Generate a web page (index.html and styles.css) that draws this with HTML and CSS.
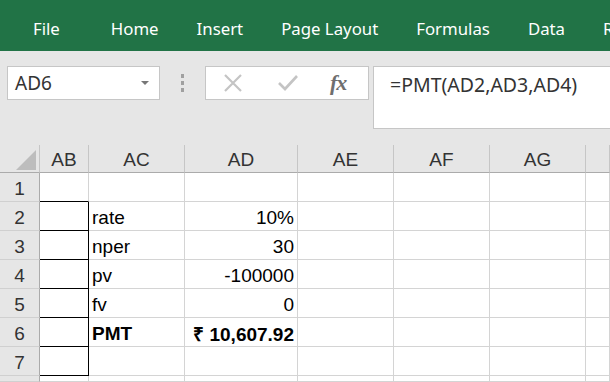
FILE: index.html
```html
<!DOCTYPE html>
<html lang="en">

<head>
    <meta charset="UTF-8">
    <title>PMT - Excel</title>
    <link rel="stylesheet" href="styles.css">
</head>

<body>
    <nav class="ribbon-tabs">
        <span class="tab file">File</span>
        <span class="tab">Home</span>
        <span class="tab">Insert</span>
        <span class="tab">Page Layout</span>
        <span class="tab">Formulas</span>
        <span class="tab">Data</span>
        <span class="tab">Review</span>
    </nav>

    <div class="formula-area">
        <div class="name-box">
            <span>AD6</span>
            <span class="caret"></span>
        </div>
        <div class="grip">
            <span></span><span></span><span></span>
        </div>
        <div class="fx-buttons">
            <svg width="22" height="22" viewBox="0 0 22 22">
                <path d="M3 3 L19 19 M19 3 L3 19" stroke="#c4c4c4" stroke-width="2.2" fill="none" />
            </svg>
            <svg width="22" height="22" viewBox="0 0 22 22">
                <path d="M2 11 L8 17 L20 4" stroke="#c4c4c4" stroke-width="2.6" fill="none" />
            </svg>
            <span class="fx">fx</span>
        </div>
        <div class="formula-input">=PMT(AD2,AD3,AD4)</div>
    </div>

    <div class="sheet">
        <div class="corner"><span class="tri"></span></div>
        <div class="col-head">AB</div>
        <div class="col-head">AC</div>
        <div class="col-head">AD</div>
        <div class="col-head">AE</div>
        <div class="col-head">AF</div>
        <div class="col-head">AG</div>
        <div class="col-head"></div>

        <div class="row-head">1</div>
        <div class="cell box-bottom"></div>
        <div class="cell"></div>
        <div class="cell"></div>
        <div class="cell"></div>
        <div class="cell"></div>
        <div class="cell"></div>
        <div class="cell"></div>

        <div class="row-head">2</div>
        <div class="cell boxed"></div>
        <div class="cell">rate</div>
        <div class="cell num">10%</div>
        <div class="cell"></div>
        <div class="cell"></div>
        <div class="cell"></div>
        <div class="cell"></div>

        <div class="row-head">3</div>
        <div class="cell boxed"></div>
        <div class="cell">nper</div>
        <div class="cell num">30</div>
        <div class="cell"></div>
        <div class="cell"></div>
        <div class="cell"></div>
        <div class="cell"></div>

        <div class="row-head">4</div>
        <div class="cell boxed"></div>
        <div class="cell">pv</div>
        <div class="cell num">-100000</div>
        <div class="cell"></div>
        <div class="cell"></div>
        <div class="cell"></div>
        <div class="cell"></div>

        <div class="row-head">5</div>
        <div class="cell boxed"></div>
        <div class="cell">fv</div>
        <div class="cell num">0</div>
        <div class="cell"></div>
        <div class="cell"></div>
        <div class="cell"></div>
        <div class="cell"></div>

        <div class="row-head">6</div>
        <div class="cell boxed"></div>
        <div class="cell bold">PMT</div>
        <div class="cell num bold">₹ 10,607.92</div>
        <div class="cell"></div>
        <div class="cell"></div>
        <div class="cell"></div>
        <div class="cell"></div>

        <div class="row-head">7</div>
        <div class="cell boxed"></div>
        <div class="cell"></div>
        <div class="cell"></div>
        <div class="cell"></div>
        <div class="cell"></div>
        <div class="cell"></div>
        <div class="cell"></div>

        <div class="row-head"></div>
        <div class="cell"></div>
        <div class="cell"></div>
        <div class="cell"></div>
        <div class="cell"></div>
        <div class="cell"></div>
        <div class="cell"></div>
        <div class="cell"></div>
    </div>
</body>

</html>
```

FILE: styles.css
```css
html {
    overflow: hidden;
}

body {
    margin: 0;
    padding: 0;
    background-color: #e6e6e6;
    font-family: 'Noto Sans', 'Open Sans', sans-serif;
    width: 610px;
    height: 382px;
    overflow: hidden;
}

.ribbon-tabs {
    display: flex;
    align-items: center;
    height: 51px;
    background-color: #217346;
    padding: 5px 0 0 33px;
    gap: 38px;
    white-space: nowrap;
    box-sizing: border-box;
    overflow: hidden;
}

.ribbon-tabs .tab {
    color: white;
    font-size: 16.8px;
}

.ribbon-tabs .file {
    margin-right: 13px;
}

.formula-area {
    display: flex;
    align-items: flex-start;
    padding: 15px 0 0 7px;
    height: 94px;
    box-sizing: border-box;
}

.name-box {
    width: 153px;
    height: 34px;
    background: white;
    border: 1px solid #c6c6c6;
    box-sizing: border-box;
    display: flex;
    align-items: center;
    justify-content: space-between;
    padding: 0 10px 0 7px;
    font-size: 19px;
    color: #333;
}

.name-box .caret {
    width: 0;
    height: 0;
    border-left: 4px solid transparent;
    border-right: 4px solid transparent;
    border-top: 4px solid #777;
}

.grip {
    width: 45px;
    height: 34px;
    display: flex;
    flex-direction: column;
    align-items: center;
    justify-content: center;
    gap: 3px;
}

.grip span {
    width: 3px;
    height: 4px;
    background: #a0a0a0;
}

.fx-buttons {
    width: 164px;
    height: 34px;
    background: white;
    border: 1px solid #c6c6c6;
    box-sizing: border-box;
    display: flex;
    align-items: center;
    padding-left: 16px;
    gap: 33px;
}

.fx-buttons .fx {
    font-family: 'Liberation Serif', serif;
    font-style: italic;
    font-weight: bold;
    font-size: 22px;
    color: #6f6f6f;
    letter-spacing: -1px;
    margin-left: -2px;
}

.formula-input {
    flex: 1;
    margin-left: 4px;
    height: 63px;
    background: white;
    border: 1px solid #c6c6c6;
    border-right: none;
    box-sizing: border-box;
    padding: 4px 0 0 16px;
    font-size: 19.5px;
    color: #333;
    white-space: nowrap;
}

.sheet {
    display: grid;
    grid-template-columns: 40px 49px 96px 113px 96px 96px 96px 24px;
    grid-template-rows: 28px repeat(7, 29px) 6px;
    background: white;
    font-family: 'Liberation Sans', Arial, sans-serif;
    font-size: 19px;
    color: #000;
}

.corner {
    background: #e6e6e6;
    border-right: 1px solid #c6c6c6;
    border-bottom: 1px solid #ababab;
    position: relative;
}

.corner .tri {
    position: absolute;
    right: 3px;
    bottom: 2px;
    width: 0;
    height: 0;
    border-left: 20px solid transparent;
    border-bottom: 20px solid #bdbdbd;
}

.col-head {
    background: #e6e6e6;
    border-right: 1px solid #c6c6c6;
    border-bottom: 1px solid #ababab;
    display: flex;
    align-items: center;
    justify-content: center;
    padding-top: 3px;
    color: #333;
}

.row-head {
    background: #e6e6e6;
    border-right: 1px solid #ababab;
    border-bottom: 1px solid #d0d0d0;
    display: flex;
    align-items: center;
    justify-content: center;
    padding-top: 3px;
    color: #333;
}

.cell {
    border-right: 1px solid #d4d4d4;
    border-bottom: 1px solid #d4d4d4;
    display: flex;
    align-items: center;
    padding: 4px 3px 0 3px;
    white-space: nowrap;
    overflow: hidden;
}

.cell.num {
    justify-content: flex-end;
}

.cell.bold {
    font-weight: bold;
}

.cell.box-bottom {
    border-bottom: 1px solid #000;
}

.cell.boxed {
    border-right: 1px solid #000;
    border-bottom: 1px solid #000;
}
```
